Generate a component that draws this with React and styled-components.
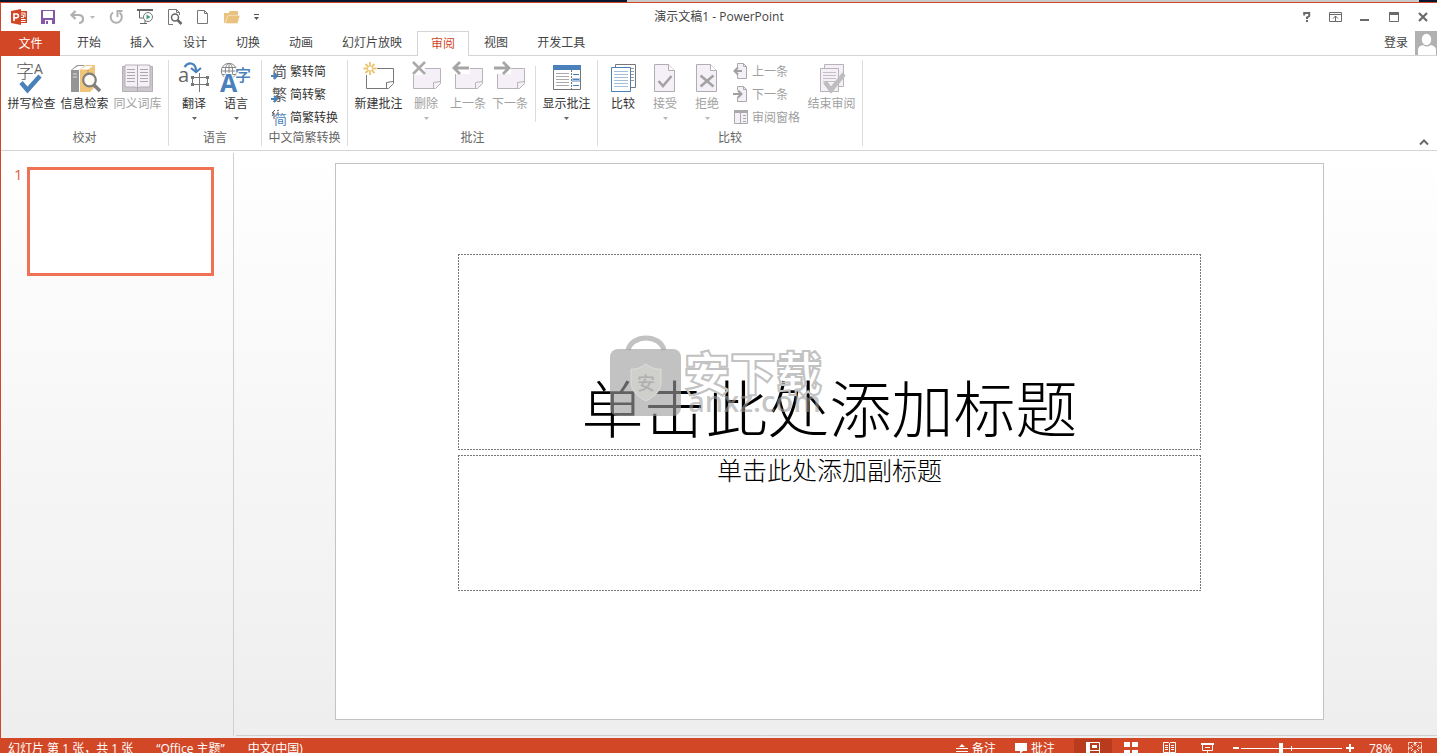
import React, { useState } from "react";
import styled, { createGlobalStyle, css } from "styled-components";

const GlobalStyle = createGlobalStyle`
  * {
    box-sizing: border-box;
  }
  body {
    margin: 0;
    overflow: hidden;
    font-family: "Open Sans", "Noto Sans CJK SC", sans-serif;
    font-size: 12px;
    color: #444444;
  }
  button {
    border: 0;
    padding: 0;
    background: none;
    font: inherit;
    color: inherit;
    white-space: nowrap;
  }
  svg {
    display: block;
    flex: none;
    overflow: visible;
  }
`;

const Window = styled.div`
  display: flex;
  flex-direction: column;
  height: 100vh;
  overflow: hidden;
  background: #ffffff;
`;
const Desktop = styled.div`
  flex: none;
  height: 2px;
  background: linear-gradient(90deg, #06182f 627px, #c9c9c9 627px, #c9c9c9 calc(100% - 18px), #06182f 0);
`;
const Frame = styled.div`
  flex: 1;
  min-height: 0;
  display: flex;
  flex-direction: column;
  border-top: 1px solid #d24726;
  border-left: 1px solid #d24726;
`;

const TitleBar = styled.header`
  flex: none;
  display: grid;
  grid-template-columns: 1fr auto 1fr;
  align-items: center;
  height: 28px;
`;
const QuickAccess = styled.div`
  display: flex;
  align-items: center;
  padding-left: 10px;
`;
const QuickButton = styled.button`
  display: flex;
  align-items: center;
  height: 24px;
  margin-right: ${(p) => p.$gap || 14}px;
`;
const WindowTitle = styled.div`
  line-height: 20px;
`;
const WindowButtons = styled.div`
  display: flex;
  justify-content: flex-end;
`;
const WindowButton = styled.button`
  display: flex;
  align-items: center;
  justify-content: center;
  width: 29px;
  height: 28px;
`;

const TabBar = styled.nav`
  flex: none;
  display: flex;
  gap: 1px;
  height: 25px;
  border-bottom: 1px solid #d4d4d4;
`;
const FileTab = styled.button`
  width: 59px;
  height: 25px;
  margin-right: 2px;
  padding-bottom: 2px;
  background: #d24726;
  color: #ffffff;
`;
const Tab = styled.button`
  height: ${(p) => (p.$active ? 25 : 24)}px;
  padding: 0 ${(p) => (p.$active ? 13 : 14)}px 2px;
  border: ${(p) => (p.$active ? "1px solid #d4d4d4" : "0")};
  border-bottom: 0;
  background: #ffffff;
  color: ${(p) => (p.$active ? "#d24726" : "#444444")};
`;
const Account = styled.div`
  display: flex;
  align-items: center;
  gap: 7px;
  height: 24px;
  margin-left: auto;
`;
const SignIn = styled.button`
  padding-bottom: 2px;
`;

const Ribbon = styled.div`
  flex: none;
  display: flex;
  height: 95px;
  padding: 4px 0;
  border-bottom: 1px solid #d4d4d4;
`;
const Group = styled.section`
  display: flex;
  flex-direction: column;
  padding: 0 4px;
  border-right: 1px solid #dcdcdc;
`;
const GroupBody = styled.div`
  display: flex;
  height: 71px;
`;
const GroupName = styled.div`
  height: 16px;
  line-height: 16px;
  text-align: center;
  white-space: nowrap;
  color: #666666;
`;
const BigButton = styled.button`
  display: flex;
  flex-direction: column;
  align-items: center;
  width: ${(p) => (p.$wide ? 53 : 42)}px;
  height: 69px;
  padding-top: 2px;
  line-height: 16px;
  color: ${(p) => (p.$off ? "#a0a0a0" : "#333333")};
`;
const BigLabel = styled.span`
  margin: 2px 0 5px;
`;
const SmallStack = styled.div`
  display: flex;
  flex-direction: column;
  padding: 0 5px;
`;
const SmallButton = styled.button`
  display: flex;
  align-items: center;
  gap: 3px;
  height: 23px;
  padding-bottom: 2px;
  color: ${(p) => (p.$off ? "#a0a0a0" : "#333333")};
`;
const Divider = styled.div`
  width: 1px;
  height: 56px;
  margin: 6px 4px 0;
  background: #dcdcdc;
`;
const Collapse = styled.button`
  align-self: flex-end;
  margin: 0 8px 0 auto;
`;

const Workspace = styled.main`
  flex: 1;
  min-height: 0;
  display: flex;
  background: linear-gradient(#ffffff, #eeeeee);
`;
const Thumbnails = styled.aside`
  flex: none;
  display: flex;
  align-items: flex-start;
  gap: 6px;
  width: 233px;
  margin: 2px 0;
  padding: 14px 19px 0 13px;
  border-right: 1px solid #d0d0d0;
`;
const SlideNumber = styled.span`
  width: 7px;
  font-size: 15px;
  line-height: 14px;
  font-weight: 500;
  color: #e2603f;
`;
const Thumbnail = styled.button`
  flex: 1;
  height: 109px;
  border: 3px solid #ee7253;
  background: #ffffff;
`;
const Editor = styled.div`
  flex: 1;
  display: flex;
  flex-direction: column;
  min-width: 0;
`;
const Canvas = styled.div`
  flex: 1;
  padding: 12px 113px 0 101px;
`;
const NotesEdge = styled.div`
  height: 1px;
  margin: 0 0 2px 2px;
  background: #d0d0d0;
`;
const Slide = styled.article`
  position: relative;
  display: flex;
  flex-direction: column;
  align-items: center;
  gap: 5px;
  aspect-ratio: 989 / 557;
  padding: 90px 122px 0;
  border: 1px solid #c3c3c3;
  background: #ffffff;
  font-family: "Liberation Serif", "Noto Sans CJK SC", serif;
  font-weight: 300;
  color: #000000;
`;
// fine 2-on 1-off dashes, tighter than the browser's own dashed border
const dashes = css`
  background:
    repeating-linear-gradient(90deg, #777777 0 2px, transparent 2px 3px) top / 100% 1px no-repeat,
    repeating-linear-gradient(90deg, #777777 0 2px, transparent 2px 3px) bottom / 100% 1px no-repeat,
    repeating-linear-gradient(#777777 0 2px, transparent 2px 3px) left / 1px 100% no-repeat,
    repeating-linear-gradient(#777777 0 2px, transparent 2px 3px) right / 1px 100% no-repeat;
`;
const TitleBox = styled.h1`
  display: flex;
  align-items: flex-end;
  justify-content: center;
  width: 100%;
  height: 196px;
  margin: 0;
  padding-bottom: 2px;
  font-size: 62px;
  line-height: 72px;
  font-weight: 300;
  ${dashes}
`;
const SubtitleBox = styled.p`
  width: 100%;
  height: 136px;
  margin: 0;
  padding-top: 2px;
  font-size: 25px;
  line-height: 30px;
  text-align: center;
  ${dashes}
`;

// stamp that floats over the slide
const Stamp = styled.div`
  position: absolute;
  top: 171px;
  left: 274px;
  display: flex;
  gap: 2px;
`;
const StampText = styled.div`
  padding-top: 12px;
`;
const StampName = styled.div`
  font-family: "Noto Sans CJK SC", sans-serif;
  font-size: 46px;
  line-height: 46px;
  font-weight: 900;
  color: transparent;
  -webkit-text-stroke: 2px #c2c2c2;
`;
const StampSite = styled.div`
  padding-left: 4px;
  font-family: "Open Sans", sans-serif;
  font-size: 29px;
  line-height: 16px;
  font-weight: 600;
  color: rgba(160, 160, 160, 0.6);
`;

const StatusBar = styled.footer`
  flex: none;
  display: flex;
  align-items: center;
  height: 20px;
  margin: 0 0 -5px -1px;
  padding: 0 15px 0 8px;
  background: #d24726;
  color: #ffffff;
  white-space: nowrap;
`;
const StatusText = styled.span`
  margin-right: 23px;
`;
const StatusTools = styled.div`
  display: flex;
  align-items: center;
  height: 20px;
  margin-left: auto;
`;
const StatusButton = styled.button`
  display: flex;
  align-items: center;
  gap: 4px;
  margin-right: 19px;
`;
const ViewButton = styled.button`
  display: flex;
  align-items: center;
  justify-content: center;
  width: 38px;
  height: 18px;
  background: ${(p) => (p.$active ? "#b83b1d" : "transparent")};
`;
const ZoomSlider = styled.input`
  appearance: none;
  width: 101px;
  height: 12px;
  margin: 0 4px 0 1px;
  background:
    linear-gradient(#ffffff, #ffffff) center / 1px 5px no-repeat,
    linear-gradient(#ffffff, #ffffff) center / 100% 1px no-repeat;
  &::-webkit-slider-thumb {
    appearance: none;
    width: 4px;
    height: 10px;
    background: #ffffff;
  }
`;
const ZoomStep = styled.button`
  margin-left: ${(p) => p.$space || 0}px;
`;
const ZoomValue = styled.span`
  width: 26px;
  margin: 0 13px 0 15px;
`;

const CJK = "'Noto Sans CJK SC', sans-serif";
const BLUE = "#4a81bb";
const LILAC = "#f5f0f7";

const Icon = ({ w = 32, h = w, children }) => (
  <svg width={w} height={h} viewBox={`0 0 ${w} ${h}`} fill="none" aria-hidden="true">
    {children}
  </svg>
);

const Arrow = ({ off }) => (
  <Icon w={5} h={3}>
    <path d="M0 0h5L2.5 3z" fill={off ? "#b8b8b8" : "#666666"} />
  </Icon>
);

const AppLogo = () => (
  <Icon w={16}>
    <path d="M9 2h7v12H9z" fill="#d24726" />
    <path d="M10 4h4v4M10 10.500h4.500M10 12.500h4.500M10 6h2.500v2.500H10" stroke="#fff" />
    <path d="M0 2l10-2v16L0 14z" fill="#d24726" />
    <path d="M3 12V5h2.500a1.800 1.800 0 0 1 0 3.800H3" stroke="#fff" strokeWidth="1.700" />
  </Icon>
);
const SaveIcon = () => (
  <Icon w={14}>
    <path d="M0 0h14v14H0z" fill="#8457ab" />
    <path d="M2 1h10v7H2zM4 10h7v4H4z" fill="#fff" />
    <path d="M5 11h2v3H5z" fill="#8457ab" />
  </Icon>
);
const UndoIcon = () => (
  <Icon w={14}>
    <path d="M5.500 1L1.500 5l4 4M2 5h6.500c6 0 6 8 .500 8" stroke="#b0b0b0" strokeWidth="2.200" />
  </Icon>
);
const RedoIcon = () => (
  <Icon w={14}>
    <path d="M10.500 2.500A5.600 5.600 0 1 1 4 2.500" stroke="#b0b0b0" strokeWidth="2" />
    <path d="M7.500 0h6v2h-4v5h-2z" fill="#b0b0b0" />
  </Icon>
);
const ShowIcon = () => (
  <Icon w={16}>
    <path d="M0 1h16" stroke="#666" strokeWidth="2" />
    <path d="M2.500 2v7h4M8 11v3M3 14.500h7" stroke="#666" />
    <circle cx="11" cy="8" r="4.500" fill="#fff" stroke="#777" />
    <path d="M9.500 5.500v5L13.500 8z" fill="#459a7c" />
  </Icon>
);
const PreviewIcon = () => (
  <Icon w={15} h={16}>
    <path d="M5 15.500H.500V.500h8l3 3V6M8.500.500v3h3" stroke="#777" />
    <circle cx="7" cy="8.500" r="3.500" fill="#fff" stroke="#666" strokeWidth="1.500" />
    <path d="M9.500 11l4 4" stroke="#666" strokeWidth="2.500" />
  </Icon>
);
const NewIcon = () => (
  <Icon w={12} h={14}>
    <path d="M.500.500h7l3 3v10H.500zM7.500.500v3h3" stroke="#777" />
  </Icon>
);
const OpenIcon = () => (
  <Icon w={16} h={13}>
    <path d="M0 12V2h5V1l1-1h8v5H4L1 12z" fill="#e8c27e" />
    <path d="M4 4.500L1 12.500h12.500l2.500-8z" fill="#e8c27e" stroke="#fff" strokeWidth=".400" />
  </Icon>
);
const MoreIcon = () => (
  <Icon w={5} h={7}>
    <path d="M0 .500h5" stroke="#555" />
    <path d="M0 3h5L2.500 6z" fill="#555" />
  </Icon>
);

const HelpIcon = () => (
  <Icon w={8} h={10}>
    <path d="M1.200 3.500V1h5v3L4 5.500V7M3 9h2" stroke="#6a6a6a" strokeWidth="2" />
  </Icon>
);
const RibbonOptionsIcon = () => (
  <Icon w={13} h={10}>
    <path d="M.500.500h12v9H.500zM0 2.500h13M6.500 9V4M4 6.500L6.500 4 9 6.500" stroke="#6a6a6a" />
  </Icon>
);
const MinimizeIcon = () => (
  <Icon w={9} h={10}>
    <path d="M0 8h9" stroke="#6a6a6a" strokeWidth="2" />
  </Icon>
);
const MaximizeIcon = () => (
  <Icon w={10}>
    <path d="M.500.500h9v9H.500z" stroke="#6a6a6a" />
    <path d="M0 0h10v3H0z" fill="#6a6a6a" />
  </Icon>
);
const CloseIcon = () => (
  <Icon w={10}>
    <path d="M1 1l8 8M9 1L1 9" stroke="#6a6a6a" strokeWidth="2.200" />
  </Icon>
);
const Avatar = () => (
  <Icon w={22} h={24}>
    <path d="M0 0h22v24H0z" fill="#b1b1b1" />
    <ellipse cx="11.500" cy="8.500" rx="4.700" ry="5.700" fill="#fff" />
    <path d="M3 24v-5q0-4 5-5 4 3 7.500 0 5.500 1 5.500 5v5z" fill="#fff" />
  </Icon>
);

const SpellIcon = () => (
  <Icon>
    <text x="0" y="16" fontSize="18" fontFamily={CJK} fontWeight="300" fill="#555">字</text>
    <text x="18" y="12" fontSize="14" fontFamily="Open Sans" fill="#666">A</text>
    <path d="M5 20.500l6.500 7.500L24 14" stroke={BLUE} strokeWidth="4.500" />
  </Icon>
);
const ResearchIcon = () => (
  <Icon>
    <path d="M2 8l6-5h8l-6 5v22H2z" fill="#959595" />
    <path d="M3 8l6-4h6l-5 4z" fill="#fff" />
    <path d="M4 12h4M4 15h4" stroke="#ddd" />
    <path d="M11 8l6-5h9v22l-5 5H11z" fill="#efc679" />
    <path d="M12 7.500L17 4h7l-5 3.500z" fill="#fff" />
    <path d="M19 8v5" stroke="#c99c4b" />
    <circle cx="20.500" cy="18" r="6.300" fill="#fff" fillOpacity=".900" stroke="#808080" strokeWidth="2.200" />
    <path d="M25 23l6 6" stroke="#808080" strokeWidth="3.500" />
  </Icon>
);
const ThesaurusIcon = () => (
  <Icon>
    <path d="M.500 4.500h30v25H.500z" fill="#cbc7cc" stroke="#b4b0b5" />
    <path d="M3 3h12.500v23L13 25H3zM28 3H15.500v23l2.500-1h10z" fill={LILAC} stroke="#b4b0b5" />
    <path d="M5 7.500h8M5 10.500h8M5 13.500h8M5 16.500h8M5 19.500h8M18 7.500h8M18 10.500h8M18 13.500h8M18 16.500h8M18 19.500h8" stroke="#aaa" />
    <path d="M15.500 3v26" stroke="#aaa" />
  </Icon>
);
const TranslateIcon = () => (
  <Icon>
    <text x="0" y="20" fontSize="20" fontFamily="Open Sans" fill="#666">a</text>
    <path d="M6.500 5C11-1 18 1 18 9" stroke={BLUE} strokeWidth="2.200" />
    <path d="M13 6l5 4 5-4" stroke={BLUE} strokeWidth="2.200" />
    <path d="M14.500 15.500h15v7h-15zM21.500 11v19" stroke="#777" />
    <path d="M13 14h3v3h-3zM28 14h3v3h-3zM13 21h3v3h-3zM28 21h3v3h-3z" fill="#777" />
  </Icon>
);
const LanguageIcon = () => (
  <Icon>
    <circle cx="9" cy="9" r="7.700" stroke="#888" />
    <ellipse cx="9" cy="9" rx="3.700" ry="7.700" stroke="#888" />
    <path d="M1 9h16M2 5.500h14M2 12.500h14M9 1v16" stroke="#888" />
    <text x="0" y="30" fontSize="25" fontFamily="Open Sans" fontWeight="700" fill={BLUE} stroke="#fff" strokeWidth="2" paintOrder="stroke">A</text>
    <text x="15" y="19" fontSize="16" fontFamily={CJK} fontWeight="500" fill={BLUE} stroke="#fff" strokeWidth="2" paintOrder="stroke">字</text>
  </Icon>
);
const HanIcon = ({ glyph, swap }) => (
  <Icon w={16}>
    {swap && <path d="M4 1L1 4h2L1 7M3 4v6M6 2l2-1M6 4h2" stroke="#555" />}
    <text x={swap ? 3 : 1} y={swap ? 15 : 14} fontSize={swap ? 13 : 15} fontFamily={CJK} fill={swap ? BLUE : "#555"}>
      {glyph}
    </text>
    {!swap && <path d="M0 13h5M3 10l3 3-3 3" stroke={BLUE} strokeWidth="2" />}
  </Icon>
);
const CommentIcon = ({ kind }) => (
  <Icon>
    <path
      d="M3.500 6.500h27v15l-5 5h-22z"
      fill={kind === "new" ? "#fff" : LILAC}
      stroke={kind === "new" ? "#777" : "#b7b3b9"}
    />
    <path d="M30 19.500l-6.500 1v6" stroke={kind === "new" ? "#777" : "#b7b3b9"} />
    {kind === "new" && (
      <g>
        <path d="M0 0h14v13H0z" fill="#fff" />
        <path d="M7 0v13M.500 6.500h13M2.500 2l9 9M11.500 2l-9 9" stroke="#edc46f" strokeWidth="1.800" />
        <circle cx="7" cy="6.500" r="2" fill="#fff" />
      </g>
    )}
    {kind === "delete" && (
      <g>
        <path d="M2 0h13v13H2z" fill="#fff" />
        <path d="M3 0l12 12M15 0L3 12" stroke="#aaa" strokeWidth="2.600" />
      </g>
    )}
    {kind === "prev" && (
      <g>
        <path d="M0 0h18v12H0z" fill="#fff" />
        <path d="M17 6H3M8 0L2 6l6 6" stroke="#a5a5a5" strokeWidth="2.800" />
      </g>
    )}
    {kind === "next" && (
      <g>
        <path d="M0 0h17v12H0z" fill="#fff" />
        <path d="M0 6h14M9 0l6 6-6 6" stroke="#a5a5a5" strokeWidth="2.800" />
      </g>
    )}
  </Icon>
);
const ShowCommentsIcon = () => (
  <Icon>
    <path d="M2.500 3.500h27v24h-27z" fill="#fff" stroke="#777" />
    <path d="M2 3h28v5H2z" fill={BLUE} />
    <path d="M5 11.500h13M5 14.500h13M5 17.500h13M5 20.500h13M5 23.500h13" stroke="#aaa" />
    <path d="M20.500 8v20" stroke="#777" strokeDasharray="2 1" />
    <path d="M21 16h8v4h-8z" fill="#a9c5e2" />
    <path d="M22 12.500h6M22 17.500h6M22 23.500h6" stroke={BLUE} />
  </Icon>
);
const CompareIcon = () => (
  <Icon>
    <path d="M8.500 2.500h20v23h-20z" fill="#fff" stroke="#777" />
    <path d="M24 6.500h3M24 9.500h3M24 12.500h3M24 15.500h3M24 18.500h3" stroke="#999" />
    <path d="M4.500 5.500h19v24h-19z" fill="#fff" stroke={BLUE} />
    <path d="M7 9.500h14M7 12.500h14M7 15.500h14M7 18.500h14M7 21.500h14M7 24.500h14" stroke="#a3bddb" />
  </Icon>
);
const VerdictIcon = ({ reject }) => (
  <Icon>
    <path d="M5.500 2.500h14l6 6v21h-20z" fill={LILAC} stroke="#b0adb2" />
    <path d="M19.500 2.500v6h6" fill="#fff" stroke="#b0adb2" />
    <path d={reject ? "M9.500 13.500l13 11M22.500 13.500l-13 11" : "M9.500 19l4.500 5 8.500-10"} stroke="#a3a3a3" strokeWidth="2.600" />
  </Icon>
);
const ChangeIcon = ({ next }) => (
  <Icon w={16}>
    <path d="M4.500 4V.500h6l3 3v12h-9V11" fill={LILAC} stroke="#aaa" />
    <path d="M10.500.500v3h3" stroke="#aaa" />
    <path d={next ? "M0 8h8M5 4.500L8.500 8 5 11.500" : "M9 8H2M5 4.500L1.500 8 5 11.500"} stroke="#a0a0a0" strokeWidth="2" />
  </Icon>
);
const PaneIcon = () => (
  <Icon w={16}>
    <path d="M1.500 1.500h13v13h-13z" fill={LILAC} stroke="#aaa" />
    <path d="M1 1h14v3H1z" fill="#aaa" />
    <path d="M7.500 4v11M10 6.500h3M10 9.500h3M10 12.500h3" stroke="#aaa" />
  </Icon>
);
const EndReviewIcon = () => (
  <Icon>
    <path d="M8.500 2.500h19v22h-19z" fill={LILAC} stroke="#b7b3b9" />
    <path d="M4.500 6.500h18v23h-18z" fill={LILAC} stroke="#b7b3b9" />
    <path d="M7 10.500h13M7 13.500h13M7 16.500h13M7 19.500h13" stroke="#c3c0c5" />
    <path d="M9 20l6 8 13-16" stroke="#bdbdbd" strokeWidth="4.500" />
  </Icon>
);

const NotesIcon = () => (
  <Icon w={12} h={10}>
    <path d="M3 4h6L6 1zM0 5h12v1H0zM0 8h12v1H0z" fill="#fff" />
  </Icon>
);
const BubbleIcon = () => (
  <Icon w={12} h={11}>
    <path d="M0 0h12v8H8l-3 3V8H0z" fill="#fff" />
  </Icon>
);
const NormalIcon = () => (
  <Icon w={14} h={12}>
    <path d="M0 0h4v12H0z" fill="#fff" />
    <path d="M.500.500h13v11H.500zM4 8.500h9.500" stroke="#fff" />
    <path d="M6 3h5v3H6z" fill="#fff" />
  </Icon>
);
const SorterIcon = () => (
  <Icon w={14} h={12}>
    <path d="M0 0h6v5H0zM8 0h6v5H8zM0 8h6v4H0zM8 8h6v4H8z" fill="#fff" />
  </Icon>
);
const ReadingIcon = () => (
  <Icon w={13} h={12}>
    <path d="M.500.500h5l1 1 1-1h5v10h-5l-1 1-1-1h-5zM6.500 1v10M2 3.500h3M2 5.500h3M2 7.500h3M8 3.500h3M8 5.500h3M8 7.500h3" stroke="#fff" />
  </Icon>
);
const PlayIcon = () => (
  <Icon w={13} h={11}>
    <path d="M0 1h13" stroke="#fff" strokeWidth="2" />
    <path d="M1.500 2v5.500h10V2M4 4.500h5M6.500 8v3M3 10.500h7" stroke="#fff" />
  </Icon>
);
const FitIcon = () => (
  <Icon w={14} h={12}>
    <path d="M.500.500h13v11H.500z" stroke="#ffd8cc" strokeDasharray="4 1" />
    <path d="M7 1v3M5.500 2.500L7 1l1.500 1.500M7 11V8M5.500 9.500L7 11l1.500-1.500M1 6h3M13 6h-3M3 3l2 2M11 3L9 5M3 9l2-2M11 9L9 7" stroke="#fff" />
  </Icon>
);

const BagIcon = () => (
  <Icon w={72} h={82}>
    <path d="M18 15C22-1 50-1 54 15" stroke="#c2c2c2" strokeWidth="5" />
    <rect x="0" y="14" width="71" height="67" rx="8" fill="#9c9c9c" fillOpacity=".620" />
    <path d="M36 29q8 6 15 5v15q-1 10-15 17-14-7-15-17V34q7 1 15-5z" fill="#cfcfcb" stroke="#dcdcdc" />
    <text x="27" y="55" fontSize="18" fontFamily={CJK} fontWeight="500" fill="#b0b0b0">安</text>
  </Icon>
);

const tabs = ["开始", "插入", "设计", "切换", "动画", "幻灯片放映", "审阅", "视图", "开发工具"];

const Big = ({ icon, label, wide, off, menu }) => (
  <BigButton $wide={wide} $off={off} disabled={off}>
    {icon}
    <BigLabel>{label}</BigLabel>
    {menu && <Arrow off={off} />}
  </BigButton>
);

const Small = ({ icon, label, off }) => (
  <SmallButton $off={off} disabled={off}>
    {icon}
    {label}
  </SmallButton>
);

const RibbonGroup = ({ name, children }) => (
  <Group aria-label={name}>
    <GroupBody>{children}</GroupBody>
    <GroupName>{name}</GroupName>
  </Group>
);

const App = () => {
  const [active, setActive] = useState("审阅");
  const [zoom, setZoom] = useState(78);

  return (
    <Window>
      <GlobalStyle />
      <Desktop />
      <Frame>
        <TitleBar>
          <QuickAccess>
            <QuickButton aria-label="PowerPoint"><AppLogo /></QuickButton>
            <QuickButton aria-label="保存" $gap={15}><SaveIcon /></QuickButton>
            <QuickButton aria-label="撤消" $gap={6}><UndoIcon /></QuickButton>
            <QuickButton aria-label="撤消选项"><Arrow off /></QuickButton>
            <QuickButton aria-label="重复"><RedoIcon /></QuickButton>
            <QuickButton aria-label="从头开始" $gap={15}><ShowIcon /></QuickButton>
            <QuickButton aria-label="打印预览"><PreviewIcon /></QuickButton>
            <QuickButton aria-label="新建" $gap={15}><NewIcon /></QuickButton>
            <QuickButton aria-label="打开"><OpenIcon /></QuickButton>
            <QuickButton aria-label="自定义快速访问工具栏"><MoreIcon /></QuickButton>
          </QuickAccess>
          <WindowTitle>演示文稿1 - PowerPoint</WindowTitle>
          <WindowButtons>
            <WindowButton aria-label="帮助"><HelpIcon /></WindowButton>
            <WindowButton aria-label="功能区显示选项"><RibbonOptionsIcon /></WindowButton>
            <WindowButton aria-label="最小化"><MinimizeIcon /></WindowButton>
            <WindowButton aria-label="最大化"><MaximizeIcon /></WindowButton>
            <WindowButton aria-label="关闭"><CloseIcon /></WindowButton>
          </WindowButtons>
        </TitleBar>

        <TabBar>
          <FileTab>文件</FileTab>
          {tabs.map((tab) => (
            <Tab key={tab} $active={tab === active} onClick={() => setActive(tab)}>
              {tab}
            </Tab>
          ))}
          <Account>
            <SignIn>登录</SignIn>
            <Avatar />
          </Account>
        </TabBar>

        <Ribbon>
          <RibbonGroup name="校对">
            <Big wide icon={<SpellIcon />} label="拼写检查" />
            <Big wide icon={<ResearchIcon />} label="信息检索" />
            <Big wide off icon={<ThesaurusIcon />} label="同义词库" />
          </RibbonGroup>
          <RibbonGroup name="语言">
            <Big menu icon={<TranslateIcon />} label="翻译" />
            <Big menu icon={<LanguageIcon />} label="语言" />
          </RibbonGroup>
          <RibbonGroup name="中文简繁转换">
            <SmallStack>
              <Small icon={<HanIcon glyph="简" />} label="繁转简" />
              <Small icon={<HanIcon glyph="繁" />} label="简转繁" />
              <Small icon={<HanIcon glyph="简" swap />} label="简繁转换" />
            </SmallStack>
          </RibbonGroup>
          <RibbonGroup name="批注">
            <Big wide icon={<CommentIcon kind="new" />} label="新建批注" />
            <Big off menu icon={<CommentIcon kind="delete" />} label="删除" />
            <Big off icon={<CommentIcon kind="prev" />} label="上一条" />
            <Big off icon={<CommentIcon kind="next" />} label="下一条" />
            <Divider />
            <Big wide menu icon={<ShowCommentsIcon />} label="显示批注" />
          </RibbonGroup>
          <RibbonGroup name="比较">
            <Big icon={<CompareIcon />} label="比较" />
            <Big off menu icon={<VerdictIcon />} label="接受" />
            <Big off menu icon={<VerdictIcon reject />} label="拒绝" />
            <SmallStack>
              <Small off icon={<ChangeIcon />} label="上一条" />
              <Small off icon={<ChangeIcon next />} label="下一条" />
              <Small off icon={<PaneIcon />} label="审阅窗格" />
            </SmallStack>
            <Big wide off icon={<EndReviewIcon />} label="结束审阅" />
          </RibbonGroup>
          <Collapse aria-label="折叠功能区">
            <Icon w={10} h={8}>
              <path d="M1 6.500l4-4 4 4" stroke="#6a6a6a" strokeWidth="2" />
            </Icon>
          </Collapse>
        </Ribbon>

        <Workspace>
          <Thumbnails>
            <SlideNumber>1</SlideNumber>
            <Thumbnail aria-label="幻灯片 1" />
          </Thumbnails>
          <Editor>
            <Canvas>
              <Slide>
                <TitleBox>单击此处添加标题</TitleBox>
                <SubtitleBox>单击此处添加副标题</SubtitleBox>
                <Stamp>
                  <BagIcon />
                  <StampText>
                    <StampName>安下载</StampName>
                    <StampSite>anxz.com</StampSite>
                  </StampText>
                </Stamp>
              </Slide>
            </Canvas>
            <NotesEdge />
          </Editor>
        </Workspace>

        <StatusBar>
          <StatusText>幻灯片 第 1 张，共 1 张</StatusText>
          <StatusText>“Office 主题”</StatusText>
          <StatusText>中文(中国)</StatusText>
          <StatusTools>
            <StatusButton><NotesIcon />备注</StatusButton>
            <StatusButton><BubbleIcon />批注</StatusButton>
            <ViewButton $active aria-label="普通视图"><NormalIcon /></ViewButton>
            <ViewButton aria-label="幻灯片浏览"><SorterIcon /></ViewButton>
            <ViewButton aria-label="阅读视图"><ReadingIcon /></ViewButton>
            <ViewButton aria-label="幻灯片放映"><PlayIcon /></ViewButton>
            <ZoomStep $space={7} aria-label="缩小" onClick={() => setZoom(Math.max(0, zoom - 10))}>
              <Icon w={7} h={8}>
                <path d="M0 4h6" stroke="#fff" strokeWidth="2" />
              </Icon>
            </ZoomStep>
            <ZoomSlider
              type="range"
              min="0"
              max="200"
              aria-label="显示比例"
              value={zoom}
              onChange={(e) => setZoom(Number(e.target.value))}
            />
            <ZoomStep aria-label="放大" onClick={() => setZoom(Math.min(200, zoom + 10))}>
              <Icon w={8}>
                <path d="M0 4h8M4 0v8" stroke="#fff" strokeWidth="2" />
              </Icon>
            </ZoomStep>
            <ZoomValue>{zoom}%</ZoomValue>
            <button aria-label="使幻灯片适应当前窗口"><FitIcon /></button>
          </StatusTools>
        </StatusBar>
      </Frame>
    </Window>
  );
};

export default App;
